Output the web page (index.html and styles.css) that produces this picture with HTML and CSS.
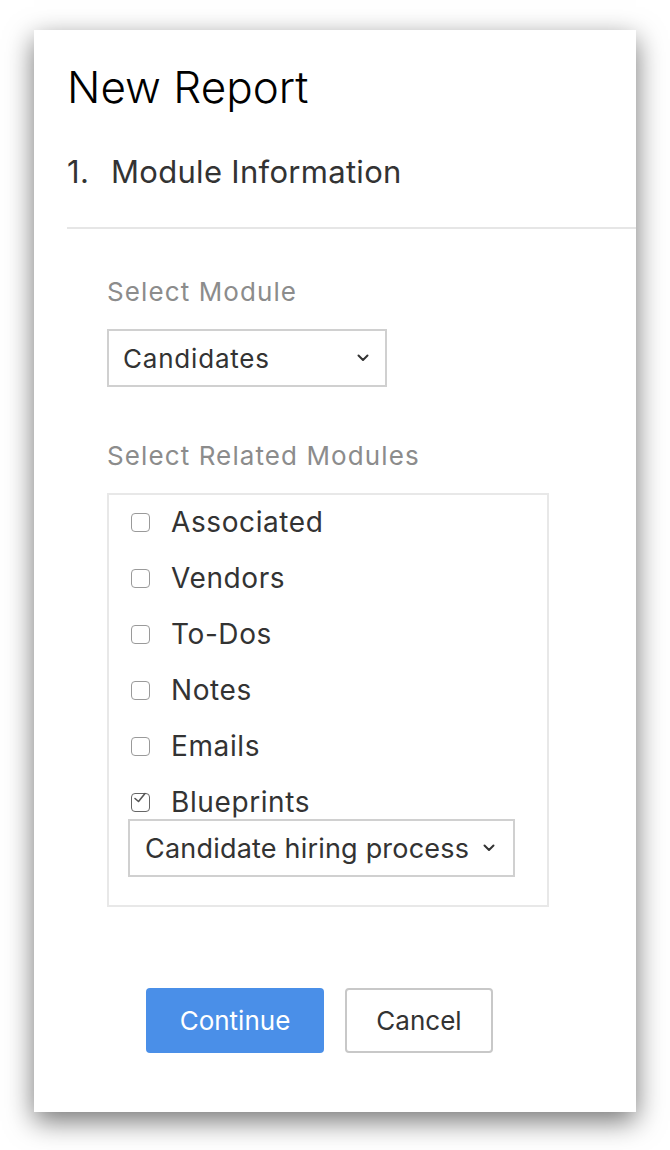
FILE: index.html
```html
<!DOCTYPE html>
<html>
<head>
<meta charset="utf-8">
<link rel="stylesheet" href="styles.css">
</head>
<body>
<div class="card">
  <h1 class="title">New Report</h1>
  <div class="step"><span class="num">1.</span><span>Module Information</span></div>
  <div class="divider"></div>
  <div class="form">
    <div class="label">Select Module</div>
    <div class="select select-module">
      <span>Candidates</span>
      <svg class="chev" width="12" height="8" viewBox="0 0 12 8"><path d="M1.5 1.5 L6 6 L10.5 1.5" fill="none" stroke="#333" stroke-width="2" stroke-linecap="round" stroke-linejoin="round"/></svg>
    </div>
    <div class="label label-related">Select Related Modules</div>
    <div class="list">
      <div class="row"><span class="cb"></span><span>Associated</span></div>
      <div class="row"><span class="cb"></span><span>Vendors</span></div>
      <div class="row"><span class="cb"></span><span>To-Dos</span></div>
      <div class="row"><span class="cb"></span><span>Notes</span></div>
      <div class="row"><span class="cb"></span><span>Emails</span></div>
      <div class="row"><span class="cb checked"><svg class="tick" width="16" height="14" viewBox="0 0 16 14"><path d="M3 7.5 L6.5 10.5 L13 2.5" fill="none" stroke="#555" stroke-width="1.6" stroke-linecap="round" stroke-linejoin="round"/></svg></span><span>Blueprints</span></div>
      <div class="select select-blueprint">
        <span>Candidate hiring process</span>
        <svg class="chev" width="12" height="8" viewBox="0 0 12 8"><path d="M1.5 1.5 L6 6 L10.5 1.5" fill="none" stroke="#333" stroke-width="2" stroke-linecap="round" stroke-linejoin="round"/></svg>
      </div>
    </div>
  </div>
  <div class="actions">
    <button class="btn btn-primary">Continue</button>
    <button class="btn btn-secondary">Cancel</button>
  </div>
</div>
</body>
</html>
```
FILE: styles.css
```css
html, body {
  margin: 0;
  padding: 0;
  background: #ffffff;
}
body {
  padding: 30px 0 40px 34px;
  font-family: "Inter", "Liberation Sans", sans-serif;
  color: #333;
}
.card {
  box-sizing: border-box;
  width: 602px;
  height: 1082px;
  background: #fff;
  box-shadow: 0 9px 26px rgba(0, 0, 0, 0.55);
  padding: 33px 0 0 33px;
}
.title {
  margin: 0;
  font-size: 44px;
  line-height: 48px;
  font-weight: 300;
  color: #000;
}
.step {
  margin-top: 41px;
  font-size: 31px;
  line-height: 40px;
  letter-spacing: 0.3px;
  color: #333;
  display: flex;
}
.step .num {
  width: 44px;
}
.divider {
  margin-top: 35px;
  height: 2px;
  background: #e6e6e6;
}
.form {
  padding-left: 40px;
}
.label {
  margin-top: 48px;
  font-size: 26px;
  line-height: 30px;
  letter-spacing: 1.1px;
  color: #8c8c8c;
}
.label-related {
  margin-top: 54px;
}
.select {
  box-sizing: border-box;
  display: flex;
  align-items: center;
  justify-content: space-between;
  border: 2px solid #d0d0d0;
  height: 58px;
  color: #333;
}
.select-module {
  margin-top: 22px;
  width: 280px;
  padding: 0 16px 0 14px;
  font-size: 26px;
  letter-spacing: 0.8px;
}
.list {
  box-sizing: border-box;
  margin-top: 22px;
  width: 442px;
  height: 414px;
  border: 2px solid #e8e8e8;
  padding: 10px 0 0 19px;
  display: flex;
  flex-direction: column;
  gap: 22px;
}
.row {
  height: 34px;
  display: flex;
  align-items: center;
  font-size: 28px;
  letter-spacing: 0.6px;
  color: #333;
}
.cb {
  box-sizing: border-box;
  width: 19px;
  height: 19px;
  margin: 0 21px 0 3px;
  border: 1.5px solid #9a9a9a;
  border-radius: 4px;
  position: relative;
}
.cb.checked {
  border-color: #666;
}
.tick {
  position: absolute;
  left: 0px;
  top: -3px;
}
.select-blueprint {
  margin-top: -22px;
  width: 387px;
  padding: 0 18px 0 15px;
  font-size: 27px;
  letter-spacing: 0.2px;
}
.actions {
  display: flex;
  gap: 21px;
  margin-top: 81px;
  padding-left: 79px;
}
.btn {
  box-sizing: border-box;
  height: 65px;
  font-family: "Inter", "Liberation Sans", sans-serif;
  font-size: 26px;
  border-radius: 4px;
  cursor: pointer;
}
.btn-primary {
  width: 178px;
  background: #4a8fe8;
  color: #fff;
  border: none;
}
.btn-secondary {
  width: 148px;
  background: #fff;
  color: #333;
  border: 2px solid #c8c8c8;
}
```
